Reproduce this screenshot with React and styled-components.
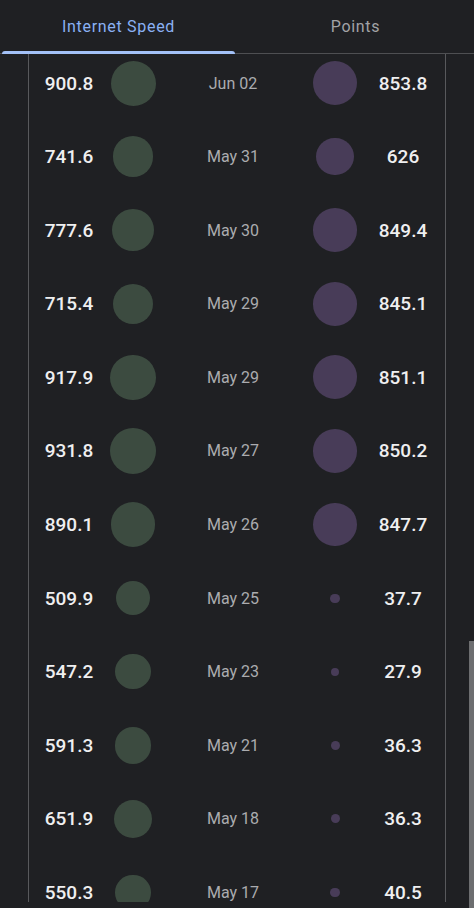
import React from "react";
import styled, { createGlobalStyle } from "styled-components";

const rows = [
  { speed: 900.8, date: "Jun 02", points: 853.8 },
  { speed: 741.6, date: "May 31", points: 626 },
  { speed: 777.6, date: "May 30", points: 849.4 },
  { speed: 715.4, date: "May 29", points: 845.1 },
  { speed: 917.9, date: "May 29", points: 851.1 },
  { speed: 931.8, date: "May 27", points: 850.2 },
  { speed: 890.1, date: "May 26", points: 847.7 },
  { speed: 509.9, date: "May 25", points: 37.7 },
  { speed: 547.2, date: "May 23", points: 27.9 },
  { speed: 591.3, date: "May 21", points: 36.3 },
  { speed: 651.9, date: "May 18", points: 36.3 },
  { speed: 550.3, date: "May 17", points: 40.5 },
];

// bubble diameter grows with the square root of the value
const size = (v) => Math.round(1.5 * Math.sqrt(v) * 10) / 10;

const App = () => {
  return (
    <>
      <GlobalStyle />
      <Page>
        <Tabs>
          <Tab active>Internet Speed</Tab>
          <Tab>Points</Tab>
        </Tabs>
        <Viewport>
          <Table>
            {rows.map((row, index) => (
              <Row key={index}>
                <Value>{row.speed}</Value>
                <Cell>
                  <Bubble color="#3c4b40" style={{ width: size(row.speed), height: size(row.speed) }} />
                </Cell>
                <DateText>{row.date}</DateText>
                <Cell>
                  <Bubble color="#483c58" style={{ width: size(row.points), height: size(row.points) }} />
                </Cell>
                <Value>{row.points}</Value>
              </Row>
            ))}
          </Table>
        </Viewport>
        <Thumb />
      </Page>
    </>
  );
};

export default App;

const GlobalStyle = createGlobalStyle`
  html, body {
    margin: 0;
    padding: 0;
    background: #1f2023;
  }
  body {
    font-family: Roboto, "Noto Sans", sans-serif;
  }
`;

const Page = styled.div`
  position: relative;
  width: 474px;
  height: 908px;
  overflow: hidden;
  background: #1f2023;
  display: flex;
  flex-direction: column;
`;

const Tabs = styled.div`
  display: grid;
  grid-template-columns: 1fr 1fr;
  height: 53px;
  border-bottom: 1px solid #4e4f52;
  flex-shrink: 0;
`;

const Tab = styled.div`
  position: relative;
  display: flex;
  align-items: center;
  justify-content: center;
  padding-bottom: 1px;
  font-size: 16px;
  letter-spacing: 0.7px;
  color: ${(p) => (p.active ? "#8ab1f4" : "#a2a3a6")};

  &::after {
    content: "";
    display: ${(p) => (p.active ? "block" : "none")};
    position: absolute;
    left: 2px;
    right: 2px;
    bottom: -1px;
    height: 3px;
    border-radius: 3px 3px 0 0;
    background: #a3c1f7;
  }
`;

const Viewport = styled.div`
  height: 848px;
  overflow: hidden;
  padding: 0 28px;
  flex-shrink: 0;
`;

const Table = styled.div`
  margin-top: -7.8px;
  border-left: 1px solid #58595c;
  border-right: 1px solid #58595c;
`;

const Row = styled.div`
  display: grid;
  grid-template-columns: 80px 48px 152px 52px 84px;
  align-items: center;
  height: 73.6px;
`;

const Cell = styled.div`
  display: flex;
  align-items: center;
  justify-content: center;
`;

const Value = styled(Cell)`
  font-size: 19px;
  font-weight: 500;
  color: #efeff0;
`;

const DateText = styled(Cell)`
  font-size: 16px;
  color: #abacaf;
`;

const Bubble = styled.div`
  border-radius: 50%;
  background: ${(p) => p.color};
  flex-shrink: 0;
`;

const Thumb = styled.div`
  position: absolute;
  right: 0;
  top: 641px;
  width: 5px;
  height: 267px;
  background: #6d6e70;
`;
